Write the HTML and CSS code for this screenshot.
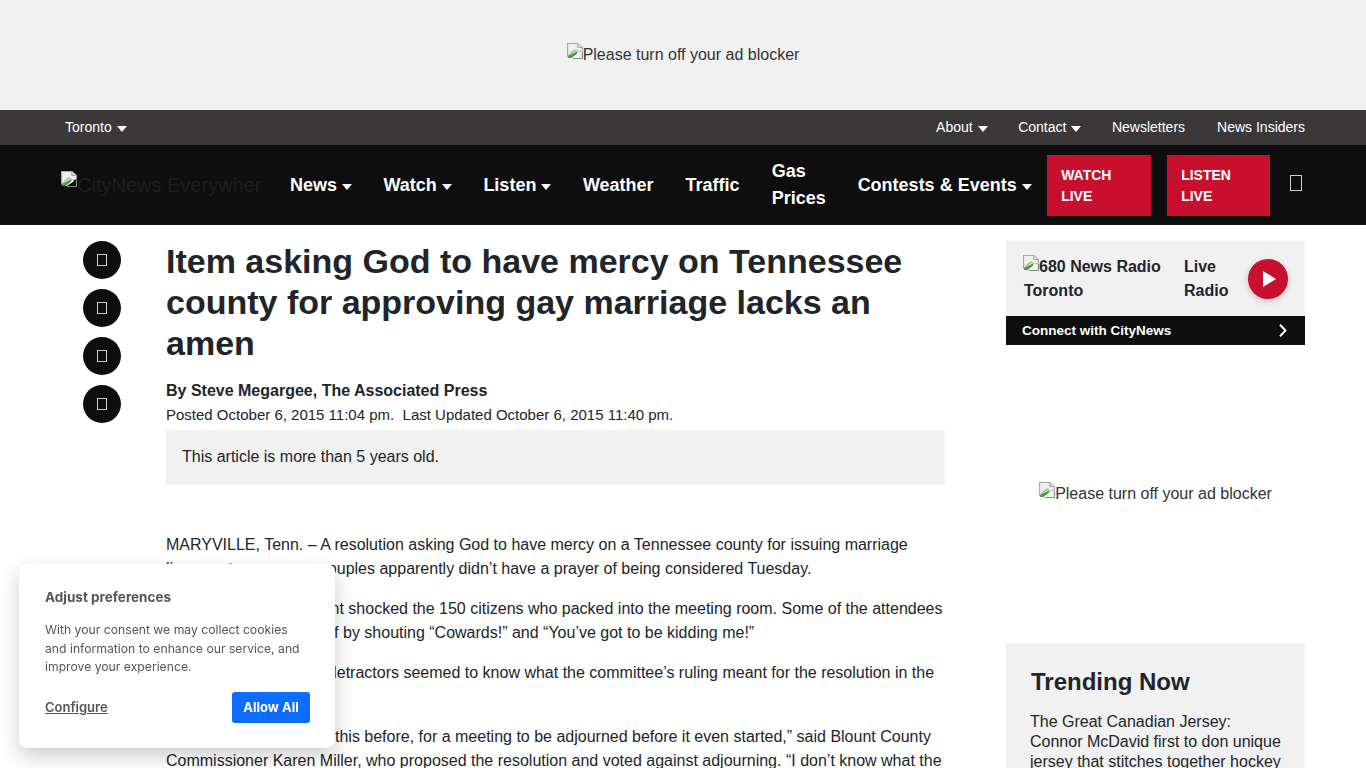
FILE: index.html
```html
<!DOCTYPE html>
<html lang="en">
<head>
  <meta charset="UTF-8">
  <meta name="viewport" content="width=device-width, initial-scale=1">
  <title>Item asking God to have mercy on Tennessee county for approving gay marriage lacks an amen</title>
  <link rel="stylesheet" href="styles.css">
</head>
<body>
  <svg class="defs" width="0" height="0">
    <symbol id="broken" viewBox="1 0 14 16" preserveAspectRatio="none">
      <path d="M1.500.500h9l4 4v3.500L1.500 13z" fill="#eef0ee" stroke="#a8a8a8"/>
      <path d="M10.500.500v4h4" fill="#dcdcdc" stroke="#a8a8a8"/>
      <path d="M2 12.500l2.500-3.500 3-2.500 3 .5z" fill="#9ccb8c"/>
      <path d="M2 15l10-6.500v2L6 15z" fill="#fff"/>
      <path d="M2 13l8.500-5-1 3L5 15H2z" fill="#4f9a46"/>
      <path d="M6 15.500h8.500V9" fill="none" stroke="#8a8a8a"/>
    </symbol>
  </svg>

  <div class="ad-top">
    <span class="alt-img"><svg class="broken"><use href="#broken"/></svg>Please turn off your ad blocker</span>
  </div>

  <div class="topbar">
    <a class="top-link">Toronto<i class="caret"></i></a>
    <nav class="top-right">
      <a class="top-link">About<i class="caret"></i></a>
      <a class="top-link">Contact<i class="caret"></i></a>
      <a class="top-link">Newsletters</a>
      <a class="top-link">News Insiders</a>
    </nav>
  </div>

  <header class="mainnav">
    <a class="logo"><svg class="broken"><use href="#broken"/></svg>CityNews Everywhere</a>
    <nav class="nav-items">
      <a class="nav-link">News<i class="caret caret-lg"></i></a>
      <a class="nav-link">Watch<i class="caret caret-lg"></i></a>
      <a class="nav-link">Listen<i class="caret caret-lg"></i></a>
      <a class="nav-link">Weather</a>
      <a class="nav-link">Traffic</a>
      <a class="nav-link nav-gas">Gas Prices</a>
      <a class="nav-link">Contests &amp; Events<i class="caret caret-lg"></i></a>
    </nav>
    <div class="live-btns">
      <a class="live-btn">WATCH LIVE</a>
      <a class="live-btn">LISTEN LIVE</a>
    </div>
    <i class="tofu tofu-search"></i>
  </header>

  <main class="page">
    <aside class="share">
      <a class="share-btn"><i class="tofu"></i></a>
      <a class="share-btn"><i class="tofu"></i></a>
      <a class="share-btn"><i class="tofu"></i></a>
      <a class="share-btn"><i class="tofu"></i></a>
    </aside>

    <article class="story">
      <h1>Item asking God to have mercy on Tennessee county for approving gay marriage lacks an amen</h1>
      <div class="byline">By Steve Megargee, The Associated Press</div>
      <div class="dates">Posted October 6, 2015 11:04 pm.&nbsp; Last Updated October 6, 2015 11:40 pm.</div>
      <div class="old-note">This article is more than 5 years old.</div>
      <div class="story-text">
        <p>MARYVILLE, Tenn. – A resolution asking God to have mercy on a Tennessee county for issuing marriage licenses to same-sex couples apparently didn’t have a prayer of being considered Tuesday.</p>
        <p>The sudden adjournment shocked the 150 citizens who packed into the meeting room. Some of the attendees expressed their disbelief by shouting “Cowards!” and “You’ve got to be kidding me!”</p>
        <p>Even its sponsors and detractors seemed to know what the committee’s ruling meant for the resolution in the future.</p>
        <p>“I’d never actually seen this before, for a meeting to be adjourned before it even started,” said Blount County Commissioner Karen Miller, who proposed the resolution and voted against adjourning. “I don’t know what the</p>
      </div>
    </article>

    <aside class="sidebar">
      <div class="radio">
        <div class="radio-row">
          <span class="radio-name"><svg class="broken"><use href="#broken"/></svg>680 News Radio Toronto</span>
          <span class="radio-live">Live Radio</span>
          <a class="play"><svg width="13" height="16" viewBox="0 0 13 16"><path d="M0 0l13 8-13 8z" fill="#fff"/></svg></a>
        </div>
        <a class="connect">Connect with CityNews
          <svg width="8" height="13" viewBox="0 0 8 13"><path d="M1 .7l5.500 5.800L1 12.300" fill="none" stroke="#fff" stroke-width="2"/></svg>
        </a>
      </div>
      <div class="ad-side">
        <span class="alt-img"><svg class="broken"><use href="#broken"/></svg>Please turn off your ad blocker</span>
      </div>
      <section class="trending">
        <h2>Trending Now</h2>
        <p>The Great Canadian Jersey: Connor McDavid first to don unique jersey that stitches together hockey history</p>
      </section>
    </aside>
  </main>

  <div class="cookie">
    <h3>Adjust preferences</h3>
    <p>With your consent we may collect cookies and information to enhance our service, and improve your experience.</p>
    <div class="cookie-actions">
      <a class="configure">Configure</a>
      <button class="allow">Allow All</button>
    </div>
  </div>
</body>
</html>
```

FILE: styles.css
```css
html, body {
  height: 768px;
  overflow: hidden;
}
body {
  margin: 0;
  font-family: "Liberation Sans", Arial, sans-serif;
  font-size: 16px;
  color: #212529;
  background: #fff;
}
.defs {
  display: block;
}
.broken {
  width: 16px;
  height: 16px;
  vertical-align: 1px;
}
.alt-img {
  color: #333;
  font-size: 16px;
  line-height: 24px;
}

.ad-top {
  height: 110px;
  background: #f1f1f1;
  display: flex;
  align-items: center;
  justify-content: center;
}

.topbar {
  height: 35px;
  box-sizing: border-box;
  background: #3a3839;
  display: flex;
  align-items: center;
  justify-content: space-between;
  padding: 0 61px 2px 65px;
}
.top-right {
  display: flex;
  gap: 32px;
}
.top-link {
  color: #fff;
  font-size: 14px;
}
.caret {
  display: inline-block;
  border-top: 6px solid #fff;
  border-left: 5px solid transparent;
  border-right: 5px solid transparent;
  margin: 0 -1.5px 0 5px;
  vertical-align: 0;
}
.caret-lg {
  margin-right: -0.5px;
  vertical-align: 1px;
}

.mainnav {
  height: 80px;
  background: #0e0e0e;
  display: flex;
  align-items: center;
  padding-left: 61px;
}
.logo {
  width: 201px;
  height: 30px;
  overflow: hidden;
  white-space: nowrap;
  font-size: 20px;
  line-height: 30px;
  color: #1c1f22;
  flex: none;
}
.logo .broken {
  vertical-align: 5px;
}
.nav-items {
  display: flex;
  align-items: center;
  gap: 32px;
  margin-left: 28px;
}
.nav-link {
  color: #fff;
  font-size: 18px;
  font-weight: 700;
  line-height: 27px;
  white-space: nowrap;
}
.nav-gas {
  width: 54px;
  white-space: normal;
}
.live-btns {
  display: flex;
  gap: 16px;
  margin-left: 16px;
}
.live-btn {
  width: 104px;
  height: 61px;
  box-sizing: border-box;
  background: #c8102e;
  color: #fff;
  font-size: 14px;
  font-weight: 700;
  line-height: 21px;
  padding: 10px 50px 0 14px;
}
.live-btn + .live-btn {
  width: 103px;
}
.tofu {
  display: block;
  width: 8px;
  height: 10px;
  border: 1px solid #ccc;
}
.tofu-search {
  width: 10px;
  height: 14px;
  margin: 0 0 4px 20px;
}

.page {
  display: flex;
  padding-top: 16px;
}
.share {
  flex: none;
  width: 38px;
  margin-left: 83px;
  display: flex;
  flex-direction: column;
  gap: 10px;
}
.share-btn {
  width: 38px;
  height: 38px;
  border-radius: 50%;
  background: #0e0e0e;
  display: flex;
  align-items: center;
  justify-content: center;
}

.story {
  flex: none;
  width: 779px;
  margin-left: 45px;
}
h1 {
  margin: 0;
  font-size: 34px;
  line-height: 41px;
  font-weight: 700;
}
.byline {
  margin-top: 15px;
  font-weight: 700;
  line-height: 24px;
  color: #212529;
}
.dates {
  line-height: 24px;
  font-size: 15px;
}
.old-note {
  margin-top: 3px;
  height: 55px;
  box-sizing: border-box;
  background: #f1f1f1;
  padding: 0 16px;
  line-height: 53px;
}
.story-text {
  margin-top: 48px;
}
.story-text p {
  margin: 0 0 16px;
  line-height: 24px;
}

.sidebar {
  flex: none;
  width: 299px;
  margin-left: 61px;
}
.radio-row {
  height: 75px;
  background: #f1f1f1;
  display: flex;
  align-items: center;
  padding: 0 17px 0 18px;
  font-weight: 700;
  line-height: 24px;
  color: #212529;
}
.radio-name {
  width: 160px;
  flex: none;
}
.radio-name .broken {
  margin-left: -1px;
}
.radio-live {
  width: 48px;
  flex: none;
}
.play {
  width: 40px;
  height: 40px;
  border-radius: 50%;
  background: #c8102e;
  display: flex;
  align-items: center;
  justify-content: center;
  margin-left: 16px;
  box-shadow: 0 2px 6px rgba(0, 0, 0, 0.2);
}
.play svg {
  margin-left: 3px;
}
.connect {
  height: 29px;
  box-sizing: border-box;
  background: #0e0e0e;
  color: #fff;
  font-size: 13.5px;
  font-weight: 700;
  display: flex;
  align-items: center;
  justify-content: space-between;
  padding: 0 18px 1px 16px;
}
.ad-side {
  height: 298px;
  display: flex;
  align-items: center;
  justify-content: center;
}
.trending {
  background: #f1f1f1;
  padding: 24px 20px 24px 25px;
}
.trending h2 {
  margin: 0 0 16px;
  font-size: 24px;
  line-height: 29px;
}
.trending p {
  margin: 0 0 0 -1px;
  line-height: 20px;
}

.cookie {
  position: fixed;
  left: 19px;
  top: 564px;
  width: 316px;
  height: 184px;
  box-sizing: border-box;
  padding: 25px 25px 0 26px;
  background: #fff;
  border-radius: 8px;
  box-shadow: 0 8px 20px rgba(0, 0, 0, 0.2);
  color: #555;
  font-family: Inter, "Liberation Sans", sans-serif;
}
.cookie h3 {
  margin: 0 0 15px;
  font-size: 13.5px;
  line-height: 17px;
  font-weight: 700;
  color: #555;
}
.cookie p {
  margin: 0;
  font-size: 12.2px;
  line-height: 18.5px;
}
.cookie-actions {
  margin-top: 15px;
  display: flex;
  align-items: center;
  justify-content: space-between;
}
.configure {
  font-size: 13px;
  font-weight: 600;
  text-decoration: underline;
}
.allow {
  width: 78px;
  height: 31px;
  background: #0d6efd;
  border: 0;
  border-radius: 3px;
  color: #fff;
  font-family: inherit;
  font-size: 13px;
  font-weight: 700;
}
```
